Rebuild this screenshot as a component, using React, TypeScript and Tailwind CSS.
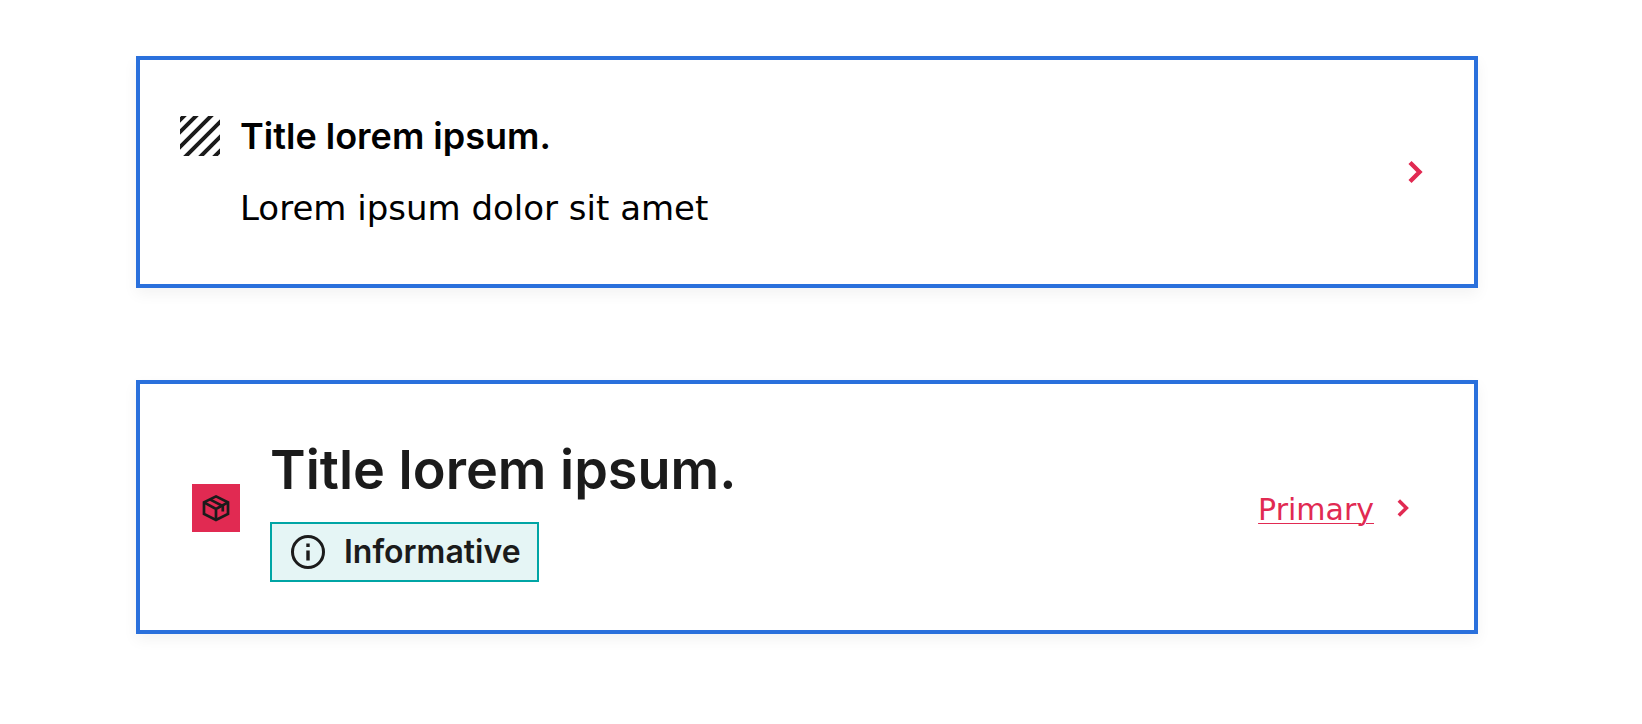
import React from "react";

const StripesIcon: React.FC = () => (
  <svg
    viewBox="0 0 40 40"
    className="size-10 shrink-0"
    stroke="#1b1b1b"
    strokeWidth="4"
    aria-hidden="true"
  >
    <path d="M-4 8L8 -4M-4 20L20 -4M-4 35L35 -4M0 46L46 0M15 46L46 15M29 46L46 29" />
  </svg>
);

const BoxIcon: React.FC = () => (
  <svg
    viewBox="0 0 48 48"
    className="size-12"
    fill="none"
    stroke="#1b1b1b"
    strokeWidth="2.7"
    aria-hidden="true"
  >
    <path d="M24 12.4L36 18.4V30L24 36L12 30V18.4Z" />
    <path d="M12 18.4L24 25L36 18.4M24 25V36" />
    <path d="M17.8 15.4L30.8 22V27.5" />
  </svg>
);

const InfoIcon: React.FC = () => (
  <svg
    viewBox="0 0 40 40"
    className="size-10 shrink-0"
    fill="none"
    stroke="#1b1b1b"
    strokeWidth="3"
    aria-hidden="true"
  >
    <circle cx="20" cy="20" r="15.5" />
    <path d="M20 18.5V28.5M20 11.5V15" strokeWidth="3.4" />
  </svg>
);

const ChevronIcon: React.FC<{ className: string }> = ({ className }) => (
  <svg
    viewBox="0 0 40 40"
    className={className}
    fill="none"
    stroke="#e12a52"
    strokeWidth="4.4"
    aria-hidden="true"
  >
    <path d="M16 10.5L25.5 20L16 29.5" />
  </svg>
);

const cardClass =
  "flex items-center justify-between border-4 border-[#2a70dc] bg-white shadow-[0_6px_14px_rgba(0,0,0,0.05)]";

const App: React.FC = () => {
  return (
    <main className="flex flex-col gap-[92px] pt-14 pr-[164px] pb-[90px] pl-[136px] font-['Inter',sans-serif]">
      <article className={`${cardClass} px-10 py-[52px]`}>
        <div className="flex items-start gap-5">
          <div className="pt-1">
            <StripesIcon />
          </div>
          <div className="flex flex-col gap-6 text-black">
            <h2 className="text-4xl leading-[48px] font-semibold">
              Title lorem ipsum.
            </h2>
            <p className="font-['DejaVu_Sans',sans-serif] text-[34px] leading-[48px]">
              Lorem ipsum dolor sit amet
            </p>
          </div>
        </div>
        <button type="button" aria-label="Open">
          <ChevronIcon className="size-10" />
        </button>
      </article>

      <article className={`${cardClass} px-[52px] pt-[50px] pb-12`}>
        <div className="flex items-center gap-[30px]">
          <div className="bg-[#e12a52]">
            <BoxIcon />
          </div>
          <div className="flex flex-col items-start gap-4 text-[#1b1b1b]">
            <h2 className="text-[54px] leading-[72px] font-semibold">
              Title lorem ipsum.
            </h2>
            <div className="flex items-center gap-4 border-2 border-[#00a5a5] bg-[#e5f5f5] px-4 py-2">
              <InfoIcon />
              <span className="text-[32px] leading-10 font-semibold">
                Informative
              </span>
            </div>
          </div>
        </div>
        <a href="#primary" className="flex items-center gap-3 px-1 text-[#e12a52]">
          <span className="pt-1 font-['DejaVu_Sans',sans-serif] text-[30px] leading-10 underline decoration-1 underline-offset-3">
            Primary
          </span>
          <ChevronIcon className="size-8" />
        </a>
      </article>
    </main>
  );
};

export default App;
